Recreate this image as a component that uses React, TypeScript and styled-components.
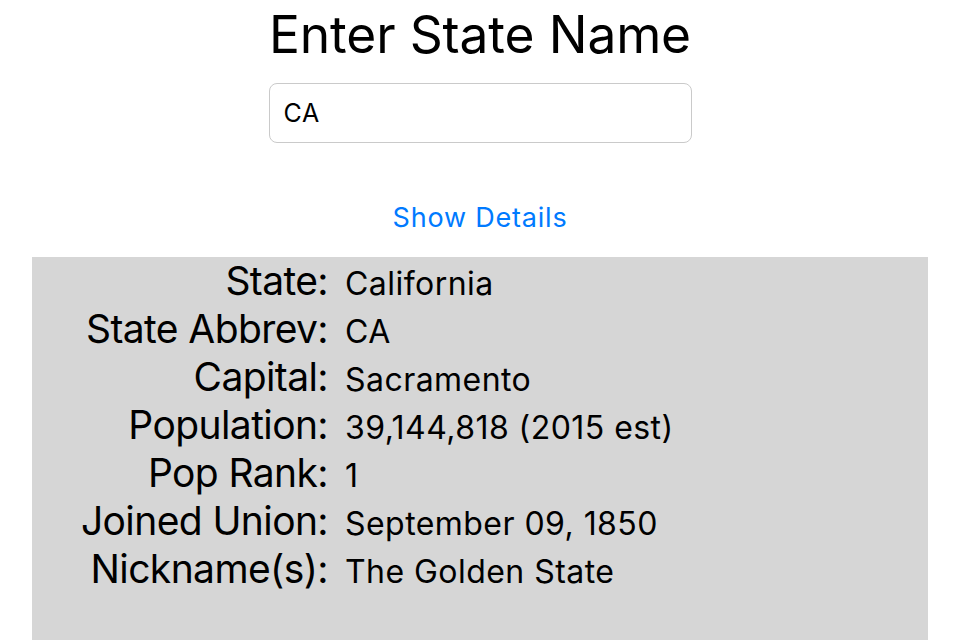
import React from "react";
import styled, { createGlobalStyle } from "styled-components";

const Global = createGlobalStyle`
  html, body { margin: 0; padding: 0; background: #ffffff; }
  body { font-family: Inter, "Noto Sans", sans-serif; color: #000; overflow: hidden; }
`;

const Page = styled.div`
  width: 960px;
  height: 640px;
  display: flex;
  flex-direction: column;
  align-items: center;
`;

const Title = styled.h1`
  margin: 4px 0 0;
  font-size: 51.5px;
  font-weight: 400;
  line-height: 60px;
  letter-spacing: -0.15px;
`;

const Field = styled.input`
  box-sizing: border-box;
  margin-top: 19px;
  width: 423px;
  height: 60px;
  border: 1px solid #cacaca;
  border-radius: 8px;
  padding: 0 14px;
  font-family: Inter, "Noto Sans", sans-serif;
  font-size: 25px;
  letter-spacing: 0.8px;
  color: #000;
  outline: none;
  background: #fff;
`;

const LinkButton = styled.button`
  margin-top: 59px;
  border: 0;
  background: none;
  padding: 0;
  font-family: Inter, "Noto Sans", sans-serif;
  font-size: 27px;
  line-height: 32px;
  letter-spacing: 0.8px;
  color: #007aff;
  cursor: pointer;
`;

const Panel = styled.div`
  box-sizing: border-box;
  margin-top: 23px;
  align-self: stretch;
  margin-left: 32px;
  margin-right: 32px;
  flex: 1;
  background: #d6d6d6;
  display: grid;
  grid-template-columns: 296px 1fr;
  grid-auto-rows: 48px;
  column-gap: 17px;
  align-content: start;
  align-items: baseline;
`;

const Label = styled.div`
  text-align: right;
  font-size: 39px;
  line-height: 48px;
  letter-spacing: -0.6px;
  white-space: nowrap;
`;

const Value = styled.div`
  font-size: 32px;
  line-height: 48px;
  letter-spacing: 0.45px;
  white-space: nowrap;
`;

const rows: [string, string][] = [
  ["State:", "California"],
  ["State Abbrev:", "CA"],
  ["Capital:", "Sacramento"],
  ["Population:", "39,144,818 (2015 est)"],
  ["Pop Rank:", "1"],
  ["Joined Union:", "September 09, 1850"],
  ["Nickname(s):", "The Golden State"],
];

export default function App() {
  return (
    <Page>
      <Global />
      <Title>Enter State Name</Title>
      <Field defaultValue="CA" />
      <LinkButton>Show Details</LinkButton>
      <Panel>
        {rows.map(([l, v]) => (
          <React.Fragment key={l}>
            <Label>{l}</Label>
            <Value>{v}</Value>
          </React.Fragment>
        ))}
      </Panel>
    </Page>
  );
}
